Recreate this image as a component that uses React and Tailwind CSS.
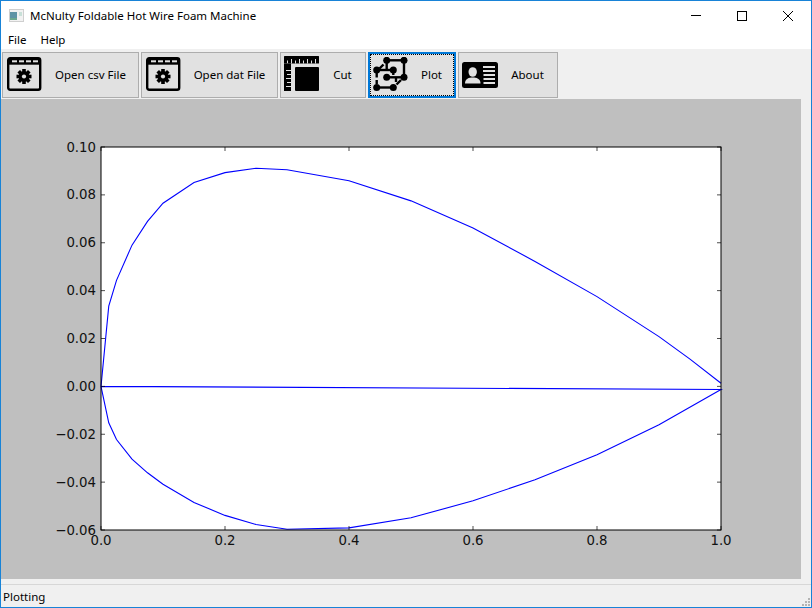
import React from "react";

const font = { fontFamily: '"Noto Sans", sans-serif' };

const X = (v) => 101 + v * 620;
const Y = (v) => 147 + (0.1 - v) * (383 / 0.16);

const data = [
  [1, 0.0013],[0.95, 0.0114],[0.9, 0.0208],[0.8, 0.0375],[0.7, 0.0522],[0.6, 0.0662],[0.5, 0.0775],[0.4, 0.0859],[0.3, 0.0905],[0.25, 0.0911],[0.2, 0.0893],[0.15, 0.0852],[0.1, 0.0765],[0.075, 0.0689],[0.05, 0.059],[0.025, 0.0443],[0.0125, 0.0335],[0, 0],
  [0.0125, -0.0152],[0.025, -0.0222],[0.05, -0.0304],[0.075, -0.0361],[0.1, -0.0409],[0.15, -0.0485],[0.2, -0.0539],[0.25, -0.0577],[0.3, -0.0597],[0.4, -0.0591],[0.5, -0.0549],[0.6, -0.0478],[0.7, -0.039],[0.8, -0.0286],[0.9, -0.016],[1, -0.0013],[0, 0],
];
const xt = [0, 0.2, 0.4, 0.6, 0.8, 1];
const yt = [0.1, 0.08, 0.06, 0.04, 0.02, 0, -0.02, -0.04, -0.06];

function Chart() {
  return (
    <svg width="800" height="480" viewBox="1 99 800 480" className="block">
      <rect x="101" y="147" width="620" height="383" fill="#fff" />
      <polyline
        points={data.map(([a, b]) => `${X(a)},${Y(b)}`).join(" ")}
        fill="none"
        stroke="#0000ff"
        strokeWidth="1.1"
      />
      {xt.map((t) => (
        <g key={t} stroke="#000" strokeWidth="0.7">
          <line x1={X(t)} x2={X(t)} y1="530" y2="526" />
          <line x1={X(t)} x2={X(t)} y1="147" y2="151" />
        </g>
      ))}
      {yt.map((t) => (
        <g key={t} stroke="#000" strokeWidth="0.7">
          <line x1="101" x2="105" y1={Y(t)} y2={Y(t)} />
          <line x1="721" x2="717" y1={Y(t)} y2={Y(t)} />
        </g>
      ))}
      <rect x="101" y="147" width="620" height="383" fill="none" stroke="#000" strokeWidth="1" />
      <g fontFamily='"DejaVu Sans", sans-serif' fontSize="13.3" fill="#111">
        {xt.map((t) => (
          <text key={t} x={X(t)} y="545" textAnchor="middle">{t.toFixed(1)}</text>
        ))}
        {yt.map((t) => (
          <text key={t} x="96" y={Y(t) + 4.5} textAnchor="end">
            {t < 0 ? "\u2212" + Math.abs(t).toFixed(2) : t.toFixed(2)}
          </text>
        ))}
      </g>
    </svg>
  );
}

function WindowGear() {
  const teeth = [0, 45, 90, 135, 180, 225, 270, 315];
  return (
    <svg width="36" height="36" viewBox="0 0 36 36" className="shrink-0">
      <rect x="1.2" y="1.2" width="32" height="31.5" rx="2" fill="none" stroke="#000" strokeWidth="2.4" />
      <rect x="1.2" y="1.2" width="32" height="6.5" fill="#000" />
      <rect x="5" y="3.3" width="5" height="2" fill="#e1e1e1" />
      <rect x="12" y="3.3" width="5" height="2" fill="#e1e1e1" />
      <rect x="19" y="3.3" width="5" height="2" fill="#e1e1e1" />
      <rect x="26" y="3.3" width="5" height="2" fill="#e1e1e1" />
      <g transform="translate(17 19.5)">
        {teeth.map((r) => (
          <rect key={r} x="-1.8" y="-7.5" width="3.6" height="4" fill="#000" transform={`rotate(${r})`} />
        ))}
        <circle r="5.4" fill="#000" />
        <circle r="2.1" fill="#e1e1e1" />
      </g>
    </svg>
  );
}

function RulerSquare() {
  return (
    <svg width="36" height="36" viewBox="0 0 36 36" className="-mt-[2px] shrink-0">
      <rect x="0" y="0" width="35" height="7.5" rx="0.5" fill="#000" />
      <g stroke="#e1e1e1" strokeWidth="1">
        {[3.5, 7.5, 11.5, 15.5, 19.5, 23.5, 27.5, 31.5].map((x, i) => (
          <line key={x} x1={x} x2={x} y1={i % 2 ? 3 : 4.5} y2="7.5" />
        ))}
      </g>
      <rect x="0" y="7.5" width="7" height="27.5" fill="#000" />
      <g stroke="#e1e1e1" strokeWidth="1">
        {[14.5, 18.5, 22.5, 26.5, 30.5].map((y, i) => (
          <line key={y} x1={i % 2 ? 3 : 2} x2="7" y1={y} y2={y} />
        ))}
      </g>
      <rect x="11" y="11" width="24" height="24" rx="1" fill="#000" />
    </svg>
  );
}

function Graph() {
  const nodes = [[13.7, 3.3],[31, 3.3],[3.7, 13],[13.7, 20.3],[31, 20.3],[20.3, 13],[3.7, 30.5],[20.3, 30.5]];
  const edges = [
    [17, 3.3, 28, 3.3],
    [10.5, 7.5, 6.5, 11.5],
    [13.7, 6, 13.7, 13],
    [7, 13, 18, 13],
    [3.7, 16, 3.7, 20.5],
    [3.7, 23, 3.7, 27],
    [7, 30.5, 17, 30.5],
    [31, 6, 31, 17],
    [23.5, 27.5, 28, 23],
    [17, 20.3, 28, 20.3],
    [23, 20.3, 23, 25],
    [20.3, 15, 20.3, 18],
  ];
  return (
    <svg width="36" height="36" viewBox="0 0 36 36" className="shrink-0">
      <g stroke="#000" strokeWidth="2.4" fill="none">
        {edges.map(([a, b, c, d]) => (
          <line key={`${a}-${b}-${c}`} x1={a} y1={b} x2={c} y2={d} />
        ))}
      </g>
      {nodes.map(([x, y]) => (
        <circle key={`${x}-${y}`} cx={x} cy={y} r="3.5" fill="#000" />
      ))}
    </svg>
  );
}

function IdCard() {
  return (
    <svg width="36" height="26" viewBox="0 0 36 26" className="shrink-0">
      <rect x="0" y="0" width="36" height="26" rx="2.5" fill="#000" />
      <ellipse cx="10.7" cy="10" rx="4.2" ry="4.8" fill="#e1e1e1" />
      <path d="M3 21.5 C3 16.5 7 15.5 10.7 15.5 C14.5 15.5 18.5 16.5 18.5 21.5 Z" fill="#e1e1e1" />
      <g fill="#e1e1e1">
        <rect x="21" y="4" width="12" height="2" />
        <rect x="21" y="8" width="12" height="2" />
        <rect x="21.5" y="12" width="11.5" height="2" />
        <rect x="21.5" y="16" width="11.5" height="2" />
        <rect x="21.5" y="20" width="11.5" height="2" />
      </g>
    </svg>
  );
}

function ToolButton({ w, icon, label, focus, iconPad = "pl-[4px]" }) {
  return (
    <div
      className={`relative flex h-[46px] shrink-0 items-center ${iconPad} ${w} ${
        focus ? "border-2 border-[#0078d7] bg-[#e1e1e1]" : "border border-[#adadad] bg-[#e1e1e1]"
      }`}
    >
      {focus && <div className="pointer-events-none absolute inset-0 border border-dotted border-black" />}
      {icon}
      <span className="flex-1 text-center text-[11.5px] text-black">{label}</span>
    </div>
  );
}

export default function App() {
  return (
    <div
      style={font}
      className="flex h-[608px] w-[812px] flex-col overflow-hidden border border-[#1883d7] bg-[#f0f0f0] text-[11.5px] text-black"
    >
      <div className="flex h-[29px] shrink-0 items-center bg-white">
        <svg width="15" height="13" viewBox="0 0 15 13" className="ml-[8px] shrink-0">
          <rect x="0" y="0" width="15" height="13" fill="#cfcfcf" />
          <rect x="1" y="1" width="13" height="11" fill="#f2f2f2" />
          <rect x="1" y="3" width="7" height="8" fill="#5f94a6" />
          <rect x="1" y="9" width="7" height="2" fill="#6da88f" />
          <rect x="10" y="3" width="3" height="4" fill="#c8e0d8" />
        </svg>
        <span className="ml-[6px]">McNulty Foldable Hot Wire Foam Machine</span>
        <div className="ml-auto flex items-center">
          <div className="flex h-[29px] w-[46px] items-center justify-center">
            <div className="h-px w-[10px] bg-black" />
          </div>
          <div className="flex h-[29px] w-[46px] items-center justify-center">
            <div className="h-[10px] w-[10px] border border-black" />
          </div>
          <div className="flex h-[29px] w-[46px] items-center justify-center">
            <svg width="10" height="10" viewBox="0 0 10 10">
              <path d="M0 0 L10 10 M10 0 L0 10" stroke="#000" strokeWidth="1" />
            </svg>
          </div>
        </div>
      </div>
      <div className="flex h-[19px] shrink-0 items-center gap-[14px] bg-white pl-[7px]">
        <span>File</span>
        <span>Help</span>
      </div>
      <div className="flex h-[50px] shrink-0 items-start gap-[2px] bg-[#f0f0f0] pl-px pt-[3px]">
        <ToolButton w="w-[137px]" icon={<WindowGear />} label="Open csv File" />
        <ToolButton w="w-[137px]" icon={<WindowGear />} label="Open dat File" />
        <ToolButton w="w-[86px]" icon={<RulerSquare />} label="Cut" iconPad="pl-[3px]" />
        <ToolButton w="w-[88px]" icon={<Graph />} label="Plot" iconPad="pl-[3px]" focus />
        <ToolButton w="w-[100px]" icon={<IdCard />} label="About" iconPad="pl-[3px]" />
      </div>
      <div className="flex h-[480px] shrink-0">
        <div className="h-[480px] w-[800px] bg-[#bfbfbf]">
          <Chart />
        </div>
      </div>
      <div className="h-[5px] shrink-0" />
      <div className="relative flex flex-1 items-center border-t border-[#d7d7d7] pl-[2px] pt-[2px]">
        <span>Plotting</span>
        <svg width="9" height="9" viewBox="0 0 9 9" className="absolute bottom-0 right-0">
          <g fill="#b4b4b4">
            <rect x="6" y="0" width="2" height="2" />
            <rect x="3" y="3" width="2" height="2" />
            <rect x="6" y="3" width="2" height="2" />
            <rect x="0" y="6" width="2" height="2" />
            <rect x="3" y="6" width="2" height="2" />
            <rect x="6" y="6" width="2" height="2" />
          </g>
        </svg>
      </div>
    </div>
  );
}
